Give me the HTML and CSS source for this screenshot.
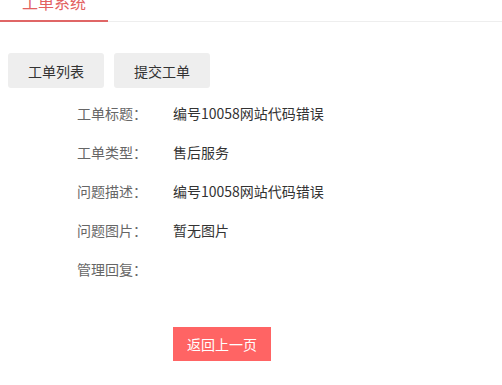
FILE: index.html
```html
<!DOCTYPE html>
<html lang="zh-CN">
<head>
    <meta charset="UTF-8">
    <meta name="viewport" content="width=device-width, initial-scale=1.0">
    <title>工单详情</title>
    <link rel="stylesheet" href="styles.css">
</head>
<body>
    <div class="tabs">
        <div class="tab">工单系统</div>
    </div>

    <div class="actions">
        <button class="btn">工单列表</button>
        <button class="btn">提交工单</button>
    </div>

    <div class="detail">
        <div class="row">
            <span class="label">工单标题：</span>
            <span class="value">编号10058网站代码错误</span>
        </div>
        <div class="row">
            <span class="label">工单类型：</span>
            <span class="value">售后服务</span>
        </div>
        <div class="row">
            <span class="label">问题描述：</span>
            <span class="value">编号10058网站代码错误</span>
        </div>
        <div class="row">
            <span class="label">问题图片：</span>
            <span class="value">暂无图片</span>
        </div>
        <div class="row">
            <span class="label">管理回复：</span>
            <span class="value"></span>
        </div>
    </div>

    <div class="footer">
        <button class="btn-back">返回上一页</button>
    </div>
</body>
</html>
```

FILE: styles.css
```css
body {
    margin: 0;
    padding: 0;
    font-family: "Noto Sans CJK SC", "Noto Sans", sans-serif;
    font-size: 14px;
    color: #333;
    background-color: white;
}

.tabs {
    display: flex;
    align-items: flex-end;
    height: 21px;
    border-bottom: 1px solid #eee;
}

.tab {
    flex-shrink: 0;
    padding: 0 22px 8px;
    line-height: 20px;
    font-size: 16px;
    color: #e26060;
    border-bottom: 2px solid #e06666;
    margin-bottom: -1px;
}

.actions {
    display: flex;
    gap: 10px;
    padding: 31px 0 0 8px;
}

.btn {
    width: 96px;
    height: 35px;
    padding: 0;
    border: none;
    border-radius: 3px;
    background-color: #eee;
    color: #333;
    font-family: inherit;
    font-size: 14px;
    cursor: pointer;
}

.detail {
    padding-top: 5px;
}

.row {
    display: flex;
    height: 39px;
    align-items: center;
}

.label {
    width: 96px;
    padding-left: 77px;
    color: #666;
}

.value {
    color: #333;
}

.footer {
    padding: 39px 0 0 173px;
}

.btn-back {
    width: 98px;
    height: 34px;
    padding: 0;
    border: none;
    background-color: #ff6464;
    color: white;
    font-family: inherit;
    font-size: 14px;
    cursor: pointer;
}
```
